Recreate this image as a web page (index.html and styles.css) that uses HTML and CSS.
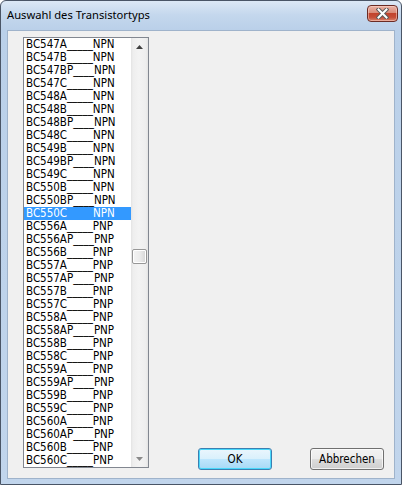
FILE: index.html
```html
<!DOCTYPE html>
<html lang="de">
<head>
<meta charset="utf-8">
<title>Auswahl des Transistortyps</title>
<link rel="stylesheet" href="styles.css">
</head>
<body>
<div class="window">
  <div class="titlebar">
    <span class="title">Auswahl des Transistortyps</span>
    <button class="close" aria-label="Schließen">
      <svg width="13" height="11" viewBox="0 0 13 11">
        <path d="M2.5 1.5 L10.5 9.5 M10.5 1.5 L2.5 9.5" stroke="#5a5a5a" stroke-width="4" stroke-linecap="square" fill="none"/>
        <path d="M2.5 1.5 L10.5 9.5 M10.5 1.5 L2.5 9.5" stroke="#ffffff" stroke-width="2" stroke-linecap="square" fill="none"/>
      </svg>
    </button>
  </div>
  <div class="client">
    <div class="listbox">
      <ul class="items">
        <li>BC547A<span class="u">_____</span>NPN</li>
        <li>BC547B<span class="u">_____</span>NPN</li>
        <li>BC547BP<span class="u">____</span>NPN</li>
        <li>BC547C<span class="u">_____</span>NPN</li>
        <li>BC548A<span class="u">_____</span>NPN</li>
        <li>BC548B<span class="u">_____</span>NPN</li>
        <li>BC548BP<span class="u">____</span>NPN</li>
        <li>BC548C<span class="u">_____</span>NPN</li>
        <li>BC549B<span class="u">_____</span>NPN</li>
        <li>BC549BP<span class="u">____</span>NPN</li>
        <li>BC549C<span class="u">_____</span>NPN</li>
        <li>BC550B<span class="u">_____</span>NPN</li>
        <li>BC550BP<span class="u">____</span>NPN</li>
        <li class="selected">BC550C<span class="u">_____</span>NPN</li>
        <li>BC556A<span class="u">_____</span>PNP</li>
        <li>BC556AP<span class="u">____</span>PNP</li>
        <li>BC556B<span class="u">_____</span>PNP</li>
        <li>BC557A<span class="u">_____</span>PNP</li>
        <li>BC557AP<span class="u">____</span>PNP</li>
        <li>BC557B<span class="u">_____</span>PNP</li>
        <li>BC557C<span class="u">_____</span>PNP</li>
        <li>BC558A<span class="u">_____</span>PNP</li>
        <li>BC558AP<span class="u">____</span>PNP</li>
        <li>BC558B<span class="u">_____</span>PNP</li>
        <li>BC558C<span class="u">_____</span>PNP</li>
        <li>BC559A<span class="u">_____</span>PNP</li>
        <li>BC559AP<span class="u">____</span>PNP</li>
        <li>BC559B<span class="u">_____</span>PNP</li>
        <li>BC559C<span class="u">_____</span>PNP</li>
        <li>BC560A<span class="u">_____</span>PNP</li>
        <li>BC560AP<span class="u">____</span>PNP</li>
        <li>BC560B<span class="u">_____</span>PNP</li>
        <li>BC560C<span class="u">_____</span>PNP</li>
      </ul>
      <div class="scrollbar">
        <div class="arrow">
          <svg width="7" height="4" viewBox="0 0 7 4"><path d="M3.5 0 L7 4 L0 4 Z" fill="#404040"/></svg>
        </div>
        <div class="track">
          <div class="thumb" style="margin-top: 194px"></div>
        </div>
        <div class="arrow">
          <svg width="7" height="4" viewBox="0 0 7 4"><path d="M0 0 L7 0 L3.5 4 Z" fill="#8a8a8a"/></svg>
        </div>
      </div>
    </div>
    <div class="buttons">
      <button class="btn default">OK</button>
      <button class="btn">Abbrechen</button>
    </div>
  </div>
</div>
</body>
</html>
```
FILE: styles.css
```css
html, body {
  margin: 0;
  padding: 0;
  background: #ffffff;
}

.window {
  width: 402px;
  height: 485px;
  box-sizing: border-box;
  border: 1px solid #4a5566;
  border-radius: 6px 6px 0 0;
  background: linear-gradient(180deg, #dce8f5 0px, #c4d7ed 14px, #bad0e9 29px, #c1d5ec 100%);
  display: flex;
  flex-direction: column;
  padding: 0 6px 5px 6px;
  overflow: hidden;
}

.titlebar {
  height: 29px;
  flex: none;
  display: flex;
  align-items: flex-start;
  justify-content: space-between;
}

.title {
  font-family: "Noto Sans", "Open Sans", sans-serif;
  font-size: 11.2px;
  color: #000000;
  margin-top: 6px;
  padding-left: 0;
}

.close {
  margin: 4px -3px 0 0;
  width: 31px;
  height: 17px;
  padding: 0;
  border: 1px solid #6b2b24;
  border-radius: 4px;
  background: linear-gradient(180deg, #eab3a6 0%, #d98b79 45%, #c2432c 50%, #c54d37 75%, #d9826b 100%);
  box-shadow: inset 0 0 0 1px rgba(255, 220, 210, 0.5);
  display: flex;
  align-items: center;
  justify-content: center;
}

.client {
  flex: 1;
  background: #f0f0f0;
  border: 1px solid #9fb3cb;
  display: flex;
  padding: 6px 10px 0 15px;
}

.listbox {
  width: 126px;
  height: 431px;
  box-sizing: border-box;
  border: 1px solid #828790;
  background: #ffffff;
  display: flex;
  flex: none;
}

.items {
  list-style: none;
  margin: 0;
  padding: 0;
  flex: 1;
  overflow: hidden;
}

.items li {
  height: 13px;
  line-height: 13px;
  padding-left: 2px;
  font-family: "DejaVu Sans Condensed", "DejaVu Sans", sans-serif;
  font-size: 11.5px;
  color: #000000;
  white-space: nowrap;
}

.items li.selected {
  background: #3399ff;
  color: #ffffff;
}

.items li.selected .u {
  color: transparent;
}

.scrollbar {
  width: 17px;
  flex: none;
  display: flex;
  flex-direction: column;
  background: linear-gradient(90deg, #e3e3e3 0px, #eeeeee 2px, #f3f3f3 8px, #eeeeee 15px, #e3e3e3 17px);
}

.arrow {
  height: 17px;
  flex: none;
  display: flex;
  align-items: center;
  justify-content: center;
}

.track {
  flex: 1;
  display: flex;
  flex-direction: column;
  align-items: center;
}

.thumb {
  width: 15px;
  height: 15px;
  box-sizing: border-box;
  border: 1px solid #979797;
  border-radius: 2px;
  background: linear-gradient(90deg, #f4f4f4 0%, #ececec 50%, #d6d6d6 100%);
  box-shadow: inset 0 0 0 1px #ffffff;
}

.buttons {
  margin-left: auto;
  align-self: flex-end;
  margin-bottom: 8px;
  display: flex;
  gap: 38px;
}

.btn {
  width: 74px;
  height: 22px;
  padding: 0;
  box-sizing: border-box;
  border: 1px solid #707070;
  border-radius: 3px;
  background: linear-gradient(180deg, #f2f2f2 0%, #ebebeb 50%, #dddddd 51%, #cfcfcf 100%);
  box-shadow: inset 0 0 0 1px rgba(255, 255, 255, 0.7);
  font-family: "DejaVu Sans Condensed", "DejaVu Sans", sans-serif;
  font-size: 11.5px;
  color: #000000;
}

.btn.default {
  border-color: #3c7fb1;
  background: linear-gradient(180deg, #eaf6fd 0%, #d9f0fc 50%, #bee6fd 51%, #a7d9f5 100%);
  box-shadow: inset 0 0 0 1px #48d8fb;
}
```
